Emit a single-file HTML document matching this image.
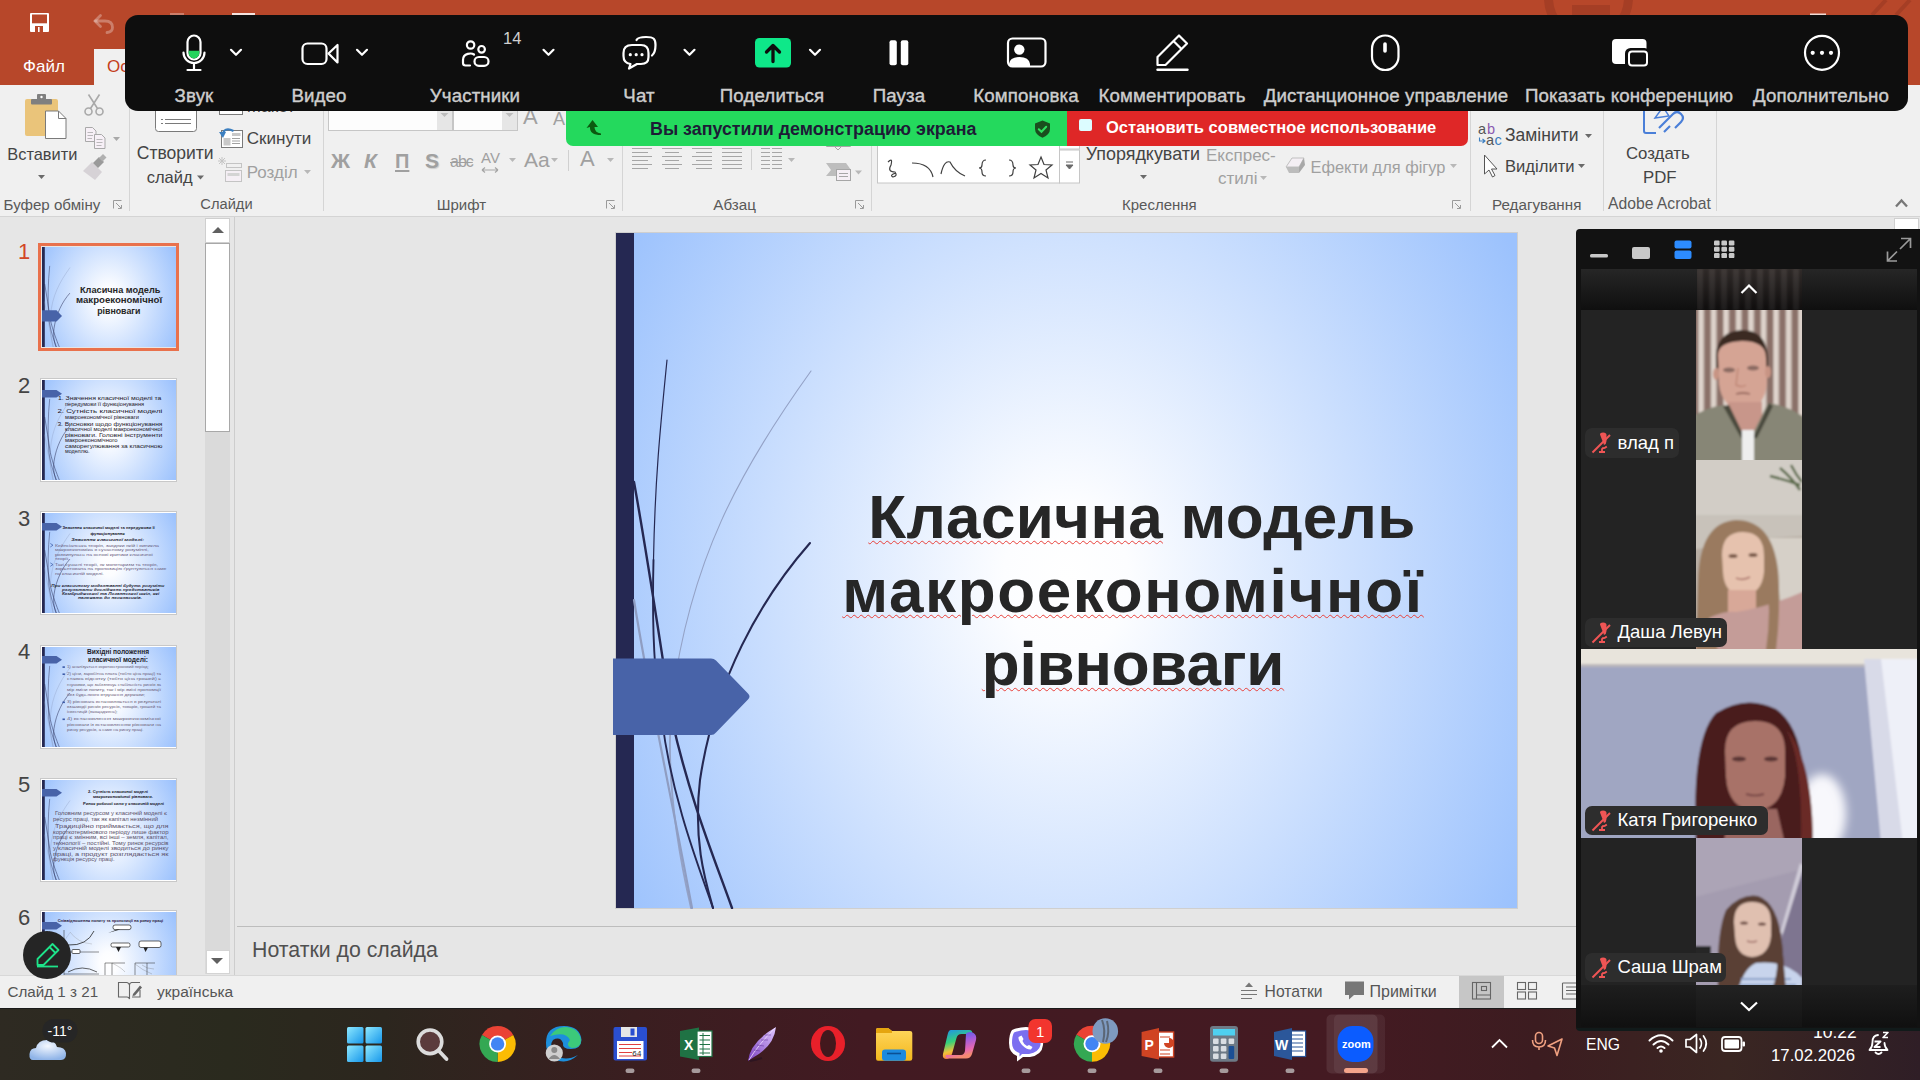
<!DOCTYPE html>
<html><head><meta charset="utf-8">
<style>
*{box-sizing:border-box;margin:0;padding:0}
html,body{width:1920px;height:1080px;overflow:hidden;background:#e6e6e6;font-family:"Liberation Sans",sans-serif}
.a{position:absolute}
.t{position:absolute;white-space:nowrap;line-height:1}
/* title bar */
#title{left:0;top:0;width:1920px;height:85px;background:#b7472a}
#tabsel{left:94px;top:49px;width:110px;height:36px;background:#f0f0f0}
#ribbon{left:0;top:85px;width:1920px;height:132px;background:#f0f0f0;border-bottom:1px solid #d4d4d4}
.sep{position:absolute;top:95px;width:1px;height:108px;background:#d4d4d4}
.glab{position:absolute;top:196px;font-size:15.5px;color:#444;white-space:nowrap;line-height:1}
.rt{position:absolute;font-size:17px;color:#262626;white-space:nowrap;line-height:1}
.rg{color:#a6a6a6}
/* workspace */
#work{left:0;top:217px;width:1920px;height:758px;background:#e6e6e6}
#status{left:0;top:975px;width:1920px;height:33px;background:#f0f0f0;border-top:1px solid #d8d8d8}
#taskbar{left:0;top:1008px;width:1920px;height:72px;background:linear-gradient(90deg,#2e2a22 0%,#2a2a1e 12%,#2c261e 20%,#3a1e20 33%,#421a22 45%,#441a22 70%,#3c1c20 80%,#3a2622 90%,#2f1e26 100%);border-top:1px solid #1a1a1a}
/* zoom toolbar */
#ztb{left:125px;top:15px;width:1783px;height:96px;background:#0e0e0e;border-radius:13px}
.zl{position:absolute;top:87px;font-size:18.7px;letter-spacing:0.12px;color:#cdcdcd;-webkit-text-stroke:0.4px #cdcdcd;white-space:nowrap;line-height:1;transform:translateX(-50%)}

.thumb{width:134px;height:100px;background:radial-gradient(ellipse 75% 75% at 48% 52%,#fff 0%,#dde8fd 35%,#9dc3fd 100%)}
.tb{border:1px solid #c8c8c8;width:137px;height:103px}
#slide{left:616px;top:233px;width:901px;height:675px;background:radial-gradient(520px 640px at 450px 345px,#ffffff 0%,#fcfdff 12%,#9cc2fd 100%);box-shadow:0 0 0 1px #cfcfcf}

.sp{text-decoration:underline wavy #e8403a;text-decoration-thickness:1px;text-underline-offset:2px}
</style></head><body>
<div id="title" class="a"></div>
<div id="tabsel" class="a"></div>
<!--TITLEICONS-->
<svg class="a" style="left:0;top:0" width="1920" height="85" viewBox="0 0 1920 85">
<rect x="30" y="13" width="19" height="19" rx="1" fill="#fff"/><rect x="32" y="14.5" width="15" height="8.8" fill="#b7472a"/><rect x="33" y="15.5" width="13" height="7" fill="#fff" opacity="0"/><rect x="35" y="26" width="8" height="6" fill="#b7472a"/><rect x="38" y="27" width="1.6" height="5" fill="#fff"/>
<g stroke="#fff" stroke-opacity="0.3" stroke-width="2.8" fill="none" stroke-linecap="round"><path d="M95.5 21 H105 Q112.5 21 112.5 27.5 Q112.5 32 107 32.5"/><path d="M100.5 15.5 L95 21 L100.5 26.5"/></g>
<rect x="232" y="13" width="23" height="2" fill="#fff" opacity="0.85"/><rect x="170" y="13" width="14" height="2" fill="#fff" opacity="0.3"/>
<circle cx="1588.5" cy="-2" r="40" fill="none" stroke="#a53e25" stroke-width="9"/><rect x="1572" y="5" width="38" height="12" fill="#a53e25"/>
<path d="M1872 15 L1886 0 M1896 15 L1910 0" stroke="#a53e25" stroke-width="4"/>
<rect x="1810" y="13.5" width="16" height="1.5" fill="#fff" opacity="0.8"/>
</svg>
<!--/TITLEICONS-->
<div class="t" style="left:23px;top:58px;font-size:17px;color:#fff">Файл</div>
<div class="t" style="left:107px;top:58px;font-size:17px;color:#c43e1c">Основне</div>
<div id="ribbon" class="a"></div>
<!--RIBBON-->
<svg class="a" style="left:0;top:85px" width="1920" height="131" viewBox="0 85 1920 131"><rect x="25" y="99" width="33" height="37" rx="2" fill="#eac47a"/><rect x="31" y="99" width="21" height="5.5" rx="1" fill="#7f7f7f"/><rect x="37" y="94" width="9" height="6" rx="1" fill="#7f7f7f"/><circle cx="41.5" cy="97" r="1.2" fill="#fff"/><path d="M45.5 111 H58.5 L66 118.5 V138.5 H45.5 Z" fill="#fff" stroke="#7a7a7a" stroke-width="1"/><path d="M58.5 111 V118.5 H66" fill="none" stroke="#7a7a7a"/><g fill="none" stroke="#a9a9a9" stroke-width="1.6"><circle cx="88.5" cy="111.5" r="3.5"/><circle cx="99.5" cy="111.5" r="3.5"/><path d="M90.5 108.5 L99.5 94.5 M97.5 108.5 L88.5 94.5"/></g><g fill="#f7f0f7" stroke="#a9a9a9" stroke-width="1"><path d="M85.5 127.5 H92.5 L96 131 V141.5 H85.5 Z"/><path d="M94.5 134.5 H101.5 L105 138 V148.5 H94.5 Z"/></g><path d="M113 137 H120 L116.5 141 Z" fill="#a9a9a9"/><path d="M87.5 132.5 H93 M87.5 135.5 H93 M87.5 138.5 H92 M96.5 139.5 H102.5 M96.5 142.5 H102.5 M96.5 145.5 H101.5" stroke="#a9a9a9" stroke-width="0.8"/><path d="M83 171 L92 162 L102 172 L95 180 Z" fill="#d6d2d6"/><path d="M93 163 L99 157 L104 162 L98 168 Z" fill="#9a9a9a"/><path d="M99 158 L103 154 L106.5 157.5 L102.5 161.5 Z" fill="#b0b0b0"/><path d="M38 175 H45 L41.5 179 Z" fill="#6a6a6a"/><path d="M197 175.5 H204 L200.5 179.5 Z" fill="#6a6a6a"/><path d="M304 170 H311 L307.5 174 Z" fill="#b8b8b8"/><path d="M1140 175 H1147 L1143.5 179 Z" fill="#6a6a6a"/><path d="M1260 176 H1267 L1263.5 180 Z" fill="#b8b8b8"/><path d="M1450 164 H1457 L1453.5 168 Z" fill="#b8b8b8"/><path d="M1585 134 H1592 L1588.5 138 Z" fill="#6a6a6a"/><path d="M1578 164 H1585 L1581.5 168 Z" fill="#6a6a6a"/><path d="M509 158 H516 L512.5 162 Z" fill="#b8b8b8"/><path d="M551 158 H558 L554.5 162 Z" fill="#b8b8b8"/><path d="M607 158 H614 L610.5 162 Z" fill="#b8b8b8"/><path d="M788 158 H795 L791.5 162 Z" fill="#b8b8b8"/><path d="M855 170.5 H862 L858.5 174.5 Z" fill="#b8b8b8"/><path d="M437 113 H444 L440.5 117 Z" fill="#b8b8b8"/><path d="M502 113 H509 L505.5 117 Z" fill="#b8b8b8"/><path d="M113.5 208.5 V200.5 H121.5" fill="none" stroke="#9a9a9a" stroke-width="1"/><path d="M116 203 L121 208 M118 208.5 H121.5 V205" fill="none" stroke="#9a9a9a" stroke-width="1"/><path d="M606.5 208.5 V200.5 H614.5" fill="none" stroke="#9a9a9a" stroke-width="1"/><path d="M609 203 L614 208 M611 208.5 H614.5 V205" fill="none" stroke="#9a9a9a" stroke-width="1"/><path d="M855.5 208.5 V200.5 H863.5" fill="none" stroke="#9a9a9a" stroke-width="1"/><path d="M858 203 L863 208 M860 208.5 H863.5 V205" fill="none" stroke="#9a9a9a" stroke-width="1"/><path d="M1452.5 208.5 V200.5 H1460.5" fill="none" stroke="#9a9a9a" stroke-width="1"/><path d="M1455 203 L1460 208 M1457 208.5 H1460.5 V205" fill="none" stroke="#9a9a9a" stroke-width="1"/><rect x="155.5" y="96" width="41" height="35.5" rx="3" fill="#fff" stroke="#7a7a7a" stroke-width="1"/><path d="M161 119.5 H163 M165 119.5 H191 M161 123.5 H163 M165 123.5 H191" stroke="#7a7a7a" stroke-width="1"/><rect x="219.5" y="100" width="23" height="14.5" fill="#fff" stroke="#7a7a7a"/><rect x="221.5" y="130.5" width="21" height="17" fill="#fff" stroke="#7a7a7a"/><rect x="223.5" y="138" width="7" height="7.5" fill="#c8c8c8"/><path d="M232 133 H240.5 V136 H232 Z" fill="#c8c8c8"/><path d="M232 138.5 H240 M232 141 H240 M232 143.5 H240" stroke="#8a8a8a" stroke-width="0.8"/><path d="M222 136 Q224 126 233.5 131" fill="none" stroke="#3c7fc0" stroke-width="2"/><path d="M219 132 L223 138 L226 132 Z" fill="#3c7fc0"/><g fill="none" stroke="#c4c4c4" stroke-width="1"><rect x="226.5" y="163.5" width="15" height="4"/><rect x="225.5" y="170.5" width="16" height="11" fill="#f5eff5"/><path d="M219 158 L225 164 M225 158 L219 164 M222 157 V165 M218 161 H226"/></g><rect x="227.5" y="173" width="12" height="3" fill="#d4d4d4"/><rect x="328.5" y="100" width="124" height="30.5" fill="#fdfdfd" stroke="#c6c6c6"/><rect x="437" y="101" width="15" height="29" fill="#e6e6e6"/><rect x="453.5" y="100" width="64" height="30.5" fill="#fdfdfd" stroke="#c6c6c6"/><rect x="502" y="101" width="15" height="29" fill="#e6e6e6"/><path d="M440.5 113 H448.5 L444.5 117 Z M505.5 113 H513.5 L509.5 117 Z" fill="#bdbdbd"/><path d="M568.5 150 V171" stroke="#d0d0d0"/><path d="M751.5 149 V170" stroke="#d0d0d0"/><path d="M482 170 H498 M482 170 L485 167.5 M482 170 L485 172.5 M498 170 L495 167.5 M498 170 L495 172.5" stroke="#a6a6a6" stroke-width="1.2" fill="none"/><path d="M632 148.5 H652 M662 148.5 H682 M692 148.5 H712 M722 148.5 H742 M761 148.5 H770 M772 148.5 H782 M632 152.5 H648 M665 152.5 H679 M696 152.5 H712 M722 152.5 H742 M761 152.5 H770 M772 152.5 H782 M632 156.5 H652 M662 156.5 H682 M692 156.5 H712 M722 156.5 H742 M761 156.5 H770 M772 156.5 H782 M632 160.5 H648 M665 160.5 H679 M696 160.5 H712 M722 160.5 H742 M761 160.5 H770 M772 160.5 H782 M632 164.5 H652 M662 164.5 H682 M692 164.5 H712 M722 164.5 H742 M761 164.5 H770 M772 164.5 H782 M632 168.5 H648 M665 168.5 H679 M696 168.5 H712 M722 168.5 H742 M761 168.5 H770 M772 168.5 H782" stroke="#a6a6a6" stroke-width="1"/><path d="M826 163 H846 L851 170 L846 176 H826 L831 170 Z" fill="#bdbdbd"/><rect x="836.5" y="169.5" width="14" height="11" fill="#f5eff5" stroke="#a6a6a6"/><path d="M839 173.5 H848 M839 176.5 H848" stroke="#a6a6a6"/><path d="M826.5 140 V146.5 H850.5 V140 M834 146 L838 150 L842 146" fill="none" stroke="#a6a6a6"/><rect x="877.5" y="100" width="182" height="83" fill="#fff" stroke="#c6c6c6"/><rect x="1059.5" y="150" width="20" height="33" fill="#fff" stroke="#c6c6c6"/><rect x="1059.5" y="100" width="20" height="49" fill="#fff" stroke="#c6c6c6"/><path d="M1066 162 H1073 M1066 165 H1073 L1069.5 169 Z" stroke="#6a6a6a" fill="#6a6a6a" stroke-width="1"/><g fill="none" stroke="#404040" stroke-width="1.2"><path d="M888 162 Q893 157 891 165 Q887 172 895 172 Q898 176 893 177 Q889 175 896 173"/><path d="M912 163 Q930 163 933 177"/><path d="M941 174 Q944 160 950 162 Q955 172 965 176"/><path d="M986 160 Q982 160 982 165 Q982 168 979 168 Q982 168 982 172 Q982 176 986 176"/><path d="M1009 160 Q1013 160 1013 165 Q1013 168 1016 168 Q1013 168 1013 172 Q1013 176 1009 176"/><path d="M1041 157 L1044 164.5 L1052 165 L1046 170 L1048 178 L1041 173.5 L1034 178 L1036 170 L1030 165 L1038 164.5 Z"/></g><path d="M1286 167 L1292 158 H1304 L1299 167 Z" fill="#f4eff4" stroke="#c0c0c0"/><path d="M1286 167 L1299 167 L1299 173 L1289 173 Z" fill="#bcbcbc"/><path d="M1299 167 L1304 158 L1305 165 L1299 173 Z" fill="#a8a8a8"/><text x="1478" y="134" font-family="Liberation Sans" font-size="14.5" fill="#555">a</text><text x="1487" y="134" font-family="Liberation Sans" font-size="14.5" fill="#8a5ab0">b</text><text x="1486" y="144.5" font-family="Liberation Sans" font-size="14.5" fill="#555">a</text><text x="1494.5" y="144.5" font-family="Liberation Sans" font-size="14.5" fill="#3c7fc0">c</text><path d="M1479.5 137.5 V141 H1485 M1482.5 139 L1485 141 L1482.5 143" fill="none" stroke="#3c7fc0" stroke-width="1.1"/><path d="M1484.5 155 V174 L1489 170 L1492.5 177 L1495 175.5 L1491.5 169 H1497 Z" fill="#fff" stroke="#555" stroke-width="1"/><path d="M1644 100 V131 Q1644 133 1646 133 H1656" fill="none" stroke="#4a7fd8" stroke-width="2"/><path d="M1659 128 L1673 114 Q1677 110 1681 114 Q1685 118 1681 122 L1675 128 M1664 132 L1670 126" fill="none" stroke="#4a7fd8" stroke-width="2.2"/><path d="M1655 118 L1663 107 L1669 116 Z" fill="none" stroke="#4a7fd8" stroke-width="1.4"/><path d="M1896 206.5 L1901.5 200.5 L1907 206.5" fill="none" stroke="#777" stroke-width="2.3"/></svg>
<div class="a" style="left:129px;top:108px;width:1px;height:103px;background:#d5d5d5"></div>
<div class="a" style="left:323px;top:108px;width:1px;height:103px;background:#d5d5d5"></div>
<div class="a" style="left:622px;top:108px;width:1px;height:103px;background:#d5d5d5"></div>
<div class="a" style="left:871px;top:108px;width:1px;height:103px;background:#d5d5d5"></div>
<div class="a" style="left:1470px;top:108px;width:1px;height:103px;background:#d5d5d5"></div>
<div class="a" style="left:1603px;top:108px;width:1px;height:103px;background:#d5d5d5"></div>
<div class="a" style="left:1716px;top:108px;width:1px;height:103px;background:#d5d5d5"></div>
<div class="t" style="left:3.6px;top:197.0px;font-size:15.1px;color:#595959;">Буфер обміну</div>
<div class="t" style="left:200.3px;top:197.1px;font-size:14.7px;color:#595959;">Слайди</div>
<div class="t" style="left:436.7px;top:196.8px;font-size:15px;color:#595959;">Шрифт</div>
<div class="t" style="left:713.3px;top:196.6px;font-size:15.2px;color:#595959;">Абзац</div>
<div class="t" style="left:1122px;top:196.8px;font-size:15px;color:#595959;">Креслення</div>
<div class="t" style="left:1492px;top:196.6px;font-size:15.2px;color:#595959;">Редагування</div>
<div class="t" style="left:1608px;top:196.2px;font-size:15.7px;color:#595959;">Adobe Acrobat</div>
<div class="t" style="left:7.3px;top:145.8px;font-size:16.4px;color:#444;">Вставити</div>
<div class="t" style="left:136.8px;top:144.9px;font-size:17.5px;color:#444;">Створити</div>
<div class="t" style="left:146.7px;top:169.0px;font-size:16.5px;color:#444;">слайд</div>
<div class="t" style="left:246.7px;top:98.0px;font-size:17.1px;color:#444;">Макет</div>
<div class="t" style="left:246.7px;top:130.1px;font-size:17.1px;color:#444;">Скинути</div>
<div class="t" style="left:246.7px;top:163.6px;font-size:17px;color:#a0a0a0;">Розділ</div>
<div class="t" style="left:1085.8px;top:145.5px;font-size:17.9px;color:#444;">Упорядкувати</div>
<div class="t" style="left:1206px;top:146.6px;font-size:17px;color:#a0a0a0;">Експрес-</div>
<div class="t" style="left:1218px;top:169.6px;font-size:17px;color:#a0a0a0;">стилі</div>
<div class="t" style="left:1310.5px;top:158.7px;font-size:16.4px;color:#a0a0a0;">Ефекти для фігур</div>
<div class="t" style="left:1505px;top:126.8px;font-size:17.5px;color:#444;">Замінити</div>
<div class="t" style="left:1505px;top:158.5px;font-size:16.6px;color:#444;">Виділити</div>
<div class="t" style="left:1626px;top:145.5px;font-size:16.8px;color:#444;">Создать</div>
<div class="t" style="left:1643px;top:169.8px;font-size:16.8px;color:#444;">PDF</div>
<div class="t" style="left:331px;top:150.2px;font-size:21px;color:#a0a0a0;font-weight:bold">Ж</div>
<div class="t" style="left:364px;top:150.2px;font-size:21px;color:#a0a0a0;font-weight:bold;font-style:italic">К</div>
<div class="t" style="left:395px;top:151.1px;font-size:20px;color:#a0a0a0;font-weight:bold;text-decoration:underline;text-underline-offset:2px;text-decoration-thickness:2px">П</div>
<div class="t" style="left:425px;top:150.2px;font-size:21px;color:#a0a0a0;font-weight:bold;text-shadow:1px 1px 1px #ccc">S</div>
<div class="t" style="left:450px;top:153.5px;font-size:16px;color:#a0a0a0;text-decoration:line-through;letter-spacing:-1px">abc</div>
<div class="t" style="left:481px;top:150.3px;font-size:15px;color:#a0a0a0;">AV</div>
<div class="t" style="left:524px;top:149.2px;font-size:21px;color:#a0a0a0;">Aa</div>
<div class="t" style="left:580px;top:148.4px;font-size:22px;color:#a0a0a0;">A</div>
<div class="t" style="left:523px;top:106.4px;font-size:22px;color:#a0a0a0;">A</div>
<div class="t" style="left:553px;top:109.8px;font-size:18px;color:#a0a0a0;">A</div>
<!--/RIBBON-->
<div id="work" class="a"></div>

<!-- thumbnails panel -->
<div class="a" style="left:234px;top:217px;width:1px;height:758px;background:#cdcdcd"></div>
<div class="a" style="left:205px;top:218px;width:25px;height:756px;background:#dadada"></div>
<div class="a" style="left:205px;top:218px;width:25px;height:24.5px;background:#fff;border:1px solid #cfcfcf"></div>
<div class="a" style="left:211.5px;top:226.5px;width:0;height:0;border-left:6px solid transparent;border-right:6px solid transparent;border-bottom:6px solid #606060"></div>
<div class="a" style="left:205px;top:243px;width:25px;height:189px;background:#fff;border:1px solid #a8a8a8"></div>
<div class="a" style="left:206px;top:950px;width:24px;height:24px;background:#fff;border:1px solid #d4d4d4"></div>
<div class="a" style="left:211px;top:958px;width:0;height:0;border-left:6px solid transparent;border-right:6px solid transparent;border-top:6px solid #606060"></div>
<div class="t" style="left:18px;top:240.8px;font-size:22px;color:#d24726">1</div>
<div class="t" style="left:18px;top:374.8px;font-size:22px;color:#444">2</div>
<div class="t" style="left:18px;top:507.8px;font-size:22px;color:#444">3</div>
<div class="t" style="left:18px;top:640.8px;font-size:22px;color:#444">4</div>
<div class="t" style="left:18px;top:773.8px;font-size:22px;color:#444">5</div>
<div class="t" style="left:18px;top:906.8px;font-size:22px;color:#444">6</div>
<div class="a" style="left:38px;top:243px;width:141px;height:108px;border:3px solid #e9714c"></div>
<!--TB-->
<div class="a" style="left:40px;top:378px;width:137px;height:104px;border:1px solid #c8c8c8;background:#fff"></div>
<div class="a" style="left:40px;top:511px;width:137px;height:104px;border:1px solid #c8c8c8;background:#fff"></div>
<div class="a" style="left:40px;top:644.5px;width:137px;height:104px;border:1px solid #c8c8c8;background:#fff"></div>
<div class="a" style="left:40px;top:778px;width:137px;height:104px;border:1px solid #c8c8c8;background:#fff"></div>
<div class="a" style="left:40px;top:910px;width:137px;height:70px;border:1px solid #c8c8c8;background:#fff"></div>
<!--/TB-->
<!--THUMBS-->
<div class="a" style="left:42px;top:247px;width:134px;height:100px;overflow:hidden"><svg width="134" height="100" viewBox="0 0 134 100" style="display:block">
<defs><radialGradient id="tg1" gradientUnits="userSpaceOnUse" cx="66.9" cy="51.3" r="77.3" gradientTransform="translate(66.9 51.3) scale(1 1.2308) translate(-66.9 -51.3)"><stop offset="0" stop-color="#fff"/><stop offset="0.12" stop-color="#fcfdff"/><stop offset="1" stop-color="#9cc2fd"/></radialGradient></defs>
<rect width="134" height="100" fill="url(#tg1)"/>
<rect x="0" y="0" width="2.8" height="100" fill="#252852"/>
<g fill="none" stroke-width="0.35">
<path d="M28 20.5 C 17.5 35.3, 10 48.7, 8.4 69.5 C 7.2 81.5, 9.5 93.3, 11 100" stroke="#8c9bc0"/>
<path d="M2.7 54.6 C 5 69.5, 8.3 84.3, 11.3 100" stroke="#8896bd"/>
<path d="M7.7 18.9 C 6 35.3, 5.5 54.6, 6.9 72.5 C 8.4 84.3, 12.6 94.8, 14.5 100" stroke="#252852" stroke-width="0.45"/>
<path d="M2.7 37 C 4.8 48.7, 6.5 60.5, 8.3 72.5 C 11 84.3, 14.7 93.3, 17.3 100" stroke="#252852" stroke-width="0.5"/>
<path d="M27.9 46.1 C 20.4 54.6, 14.2 66.5, 12 81.4 C 10.9 90.3, 12.7 96.3, 14 100" stroke="#252852" stroke-width="0.5"/>
</g>
<path d="M-0.5 63.3 H14.5 L20 68.9 L14.5 74.6 H-0.5 Z" fill="#4863a8"/>
<g transform="translate(0,0)"><text x="38" y="45.5" textLength="80.4" lengthAdjust="spacingAndGlyphs" font-family="Liberation Sans" font-size="9.2" font-weight="bold" font-style="normal" fill="#262626">Класична модель</text><text x="34" y="56.4" textLength="86.1" lengthAdjust="spacingAndGlyphs" font-family="Liberation Sans" font-size="9.2" font-weight="bold" font-style="normal" fill="#262626">макроекономічної</text><text x="55.2" y="67.3" textLength="43.2" lengthAdjust="spacingAndGlyphs" font-family="Liberation Sans" font-size="9.2" font-weight="bold" font-style="normal" fill="#262626">рівноваги</text></g>
</svg></div>
<div class="a" style="left:42px;top:380px;width:134px;height:100px;overflow:hidden"><svg width="134" height="100" viewBox="0 0 134 100" style="display:block">
<defs><radialGradient id="tg2" gradientUnits="userSpaceOnUse" cx="66.9" cy="51.3" r="77.3" gradientTransform="translate(66.9 51.3) scale(1 1.2308) translate(-66.9 -51.3)"><stop offset="0" stop-color="#fff"/><stop offset="0.12" stop-color="#fcfdff"/><stop offset="1" stop-color="#9cc2fd"/></radialGradient></defs>
<rect width="134" height="100" fill="url(#tg2)"/>
<rect x="0" y="0" width="2.8" height="100" fill="#252852"/>
<g fill="none" stroke-width="0.35">
<path d="M28 20.5 C 17.5 35.3, 10 48.7, 8.4 69.5 C 7.2 81.5, 9.5 93.3, 11 100" stroke="#8c9bc0"/>
<path d="M2.7 54.6 C 5 69.5, 8.3 84.3, 11.3 100" stroke="#8896bd"/>
<path d="M7.7 18.9 C 6 35.3, 5.5 54.6, 6.9 72.5 C 8.4 84.3, 12.6 94.8, 14.5 100" stroke="#252852" stroke-width="0.45"/>
<path d="M2.7 37 C 4.8 48.7, 6.5 60.5, 8.3 72.5 C 11 84.3, 14.7 93.3, 17.3 100" stroke="#252852" stroke-width="0.5"/>
<path d="M27.9 46.1 C 20.4 54.6, 14.2 66.5, 12 81.4 C 10.9 90.3, 12.7 96.3, 14 100" stroke="#252852" stroke-width="0.5"/>
</g>
<path d="M-0.5 10 H14.5 L20 13.8 L14.5 17.5 H-0.5 Z" fill="#4863a8"/>
<text x="15.9" y="20.0" textLength="103.5" lengthAdjust="spacingAndGlyphs" font-family="Liberation Sans" font-size="4.5" font-weight="normal" font-style="normal" fill="#1e1828">1.   Значення   класичної   моделі   та</text><text x="23" y="25.5" textLength="79" lengthAdjust="spacingAndGlyphs" font-family="Liberation Sans" font-size="4.5" font-weight="normal" font-style="normal" fill="#1e1828">передумови її функціонування</text><text x="15.4" y="32.7" textLength="105.0" lengthAdjust="spacingAndGlyphs" font-family="Liberation Sans" font-size="4.5" font-weight="normal" font-style="normal" fill="#1e1828">2.    Сутність    класичної    моделі</text><text x="23" y="38.8" textLength="74" lengthAdjust="spacingAndGlyphs" font-family="Liberation Sans" font-size="4.5" font-weight="normal" font-style="normal" fill="#1e1828">макроекономічної рівноваги</text><text x="15.4" y="45.7" textLength="105.0" lengthAdjust="spacingAndGlyphs" font-family="Liberation Sans" font-size="4.5" font-weight="normal" font-style="normal" fill="#1e1828">3.  Висновки  щодо  функціонування</text><text x="23" y="51.1" textLength="97.4" lengthAdjust="spacingAndGlyphs" font-family="Liberation Sans" font-size="4.5" font-weight="normal" font-style="normal" fill="#1e1828">класичної моделі макроекономічної</text><text x="23" y="56.7" textLength="97.4" lengthAdjust="spacingAndGlyphs" font-family="Liberation Sans" font-size="4.5" font-weight="normal" font-style="normal" fill="#1e1828">рівноваги.   Головні   інструменти</text><text x="23" y="61.8" textLength="52.5" lengthAdjust="spacingAndGlyphs" font-family="Liberation Sans" font-size="4.5" font-weight="normal" font-style="normal" fill="#1e1828">макроекономічного</text><text x="23" y="67.9" textLength="97.4" lengthAdjust="spacingAndGlyphs" font-family="Liberation Sans" font-size="4.5" font-weight="normal" font-style="normal" fill="#1e1828">саморегулювання  за  класичною</text><text x="23" y="73.0" textLength="24.5" lengthAdjust="spacingAndGlyphs" font-family="Liberation Sans" font-size="4.5" font-weight="normal" font-style="normal" fill="#1e1828">моделлю.</text>
</svg></div>
<div class="a" style="left:42px;top:513px;width:134px;height:100px;overflow:hidden"><svg width="134" height="100" viewBox="0 0 134 100" style="display:block">
<defs><radialGradient id="tg3" gradientUnits="userSpaceOnUse" cx="66.9" cy="51.3" r="77.3" gradientTransform="translate(66.9 51.3) scale(1 1.2308) translate(-66.9 -51.3)"><stop offset="0" stop-color="#fff"/><stop offset="0.12" stop-color="#fcfdff"/><stop offset="1" stop-color="#9cc2fd"/></radialGradient></defs>
<rect width="134" height="100" fill="url(#tg3)"/>
<rect x="0" y="0" width="2.8" height="100" fill="#252852"/>
<g fill="none" stroke-width="0.35">
<path d="M28 20.5 C 17.5 35.3, 10 48.7, 8.4 69.5 C 7.2 81.5, 9.5 93.3, 11 100" stroke="#8c9bc0"/>
<path d="M2.7 54.6 C 5 69.5, 8.3 84.3, 11.3 100" stroke="#8896bd"/>
<path d="M7.7 18.9 C 6 35.3, 5.5 54.6, 6.9 72.5 C 8.4 84.3, 12.6 94.8, 14.5 100" stroke="#252852" stroke-width="0.45"/>
<path d="M2.7 37 C 4.8 48.7, 6.5 60.5, 8.3 72.5 C 11 84.3, 14.7 93.3, 17.3 100" stroke="#252852" stroke-width="0.5"/>
<path d="M27.9 46.1 C 20.4 54.6, 14.2 66.5, 12 81.4 C 10.9 90.3, 12.7 96.3, 14 100" stroke="#252852" stroke-width="0.5"/>
</g>
<path d="M-0.5 10 H14.5 L20 13.8 L14.5 17.5 H-0.5 Z" fill="#4863a8"/>
<text x="20.5" y="16.4" textLength="92.3" lengthAdjust="spacingAndGlyphs" font-family="Liberation Sans" font-size="3.6" font-weight="bold" font-style="normal" fill="#1a1a2a">Значення класичної моделі та передумови її</text><text x="48.5" y="21.5" textLength="34.2" lengthAdjust="spacingAndGlyphs" font-family="Liberation Sans" font-size="3.6" font-weight="bold" font-style="normal" fill="#1a1a2a">функціонування</text><text x="29.2" y="27.9" textLength="72.8" lengthAdjust="spacingAndGlyphs" font-family="Liberation Sans" font-size="4.2" font-weight="bold" font-style="italic" fill="#2a2a3a">Значення класичної моделі:</text><text x="12.9" y="33.7" textLength="103.89999999999999" lengthAdjust="spacingAndGlyphs" font-family="Liberation Sans" font-size="4.2" font-weight="normal" font-style="normal" fill="#6a6080">Кейнсіанська теорія, завдяки якій і виникла</text><text x="12.9" y="38.1" textLength="93.69999999999999" lengthAdjust="spacingAndGlyphs" font-family="Liberation Sans" font-size="4.2" font-weight="normal" font-style="normal" fill="#6a6080">макроекономіка в сучасному розумінні,</text><text x="12.9" y="42.6" textLength="98.1" lengthAdjust="spacingAndGlyphs" font-family="Liberation Sans" font-size="4.2" font-weight="normal" font-style="normal" fill="#6a6080">розвинулась на основі критики класичної</text><text x="12.9" y="47.0" textLength="14.6" lengthAdjust="spacingAndGlyphs" font-family="Liberation Sans" font-size="4.2" font-weight="normal" font-style="normal" fill="#6a6080">теорії.</text><text x="12.9" y="53.1" textLength="103.1" lengthAdjust="spacingAndGlyphs" font-family="Liberation Sans" font-size="4.2" font-weight="normal" font-style="normal" fill="#6a6080">Такі сучасні теорії, як монетаризм та теорія,</text><text x="12.9" y="57.0" textLength="111.6" lengthAdjust="spacingAndGlyphs" font-family="Liberation Sans" font-size="4.2" font-weight="normal" font-style="normal" fill="#6a6080">зорієнтована на пропозицію ґрунтуються саме</text><text x="12.9" y="61.8" textLength="48.9" lengthAdjust="spacingAndGlyphs" font-family="Liberation Sans" font-size="4.2" font-weight="normal" font-style="normal" fill="#6a6080">на класичній моделі.</text><text x="9.3" y="74.0" textLength="113.10000000000001" lengthAdjust="spacingAndGlyphs" font-family="Liberation Sans" font-size="4.2" font-weight="bold" font-style="italic" fill="#2a2a3a">При класичному моделюванні будуть розуміти</text><text x="20" y="77.5" textLength="97.4" lengthAdjust="spacingAndGlyphs" font-family="Liberation Sans" font-size="4.2" font-weight="bold" font-style="italic" fill="#2a2a3a">результати досліджень представників</text><text x="20" y="82.1" textLength="97.4" lengthAdjust="spacingAndGlyphs" font-family="Liberation Sans" font-size="4.2" font-weight="bold" font-style="italic" fill="#2a2a3a">Кембриджської та Лозаннської шкіл, які</text><text x="36" y="85.7" textLength="64" lengthAdjust="spacingAndGlyphs" font-family="Liberation Sans" font-size="4.2" font-weight="bold" font-style="italic" fill="#2a2a3a">належать до неокласиків.</text><path d="M8.3 30.5 L11 32.2 L8.3 34 M8.3 49.9 L11 51.6 L8.3 53.3" stroke="#3a5aa8" stroke-width="0.7" fill="none"/>
</svg></div>
<div class="a" style="left:42px;top:646.5px;width:134px;height:100px;overflow:hidden"><svg width="134" height="100" viewBox="0 0 134 100" style="display:block">
<defs><radialGradient id="tg4" gradientUnits="userSpaceOnUse" cx="66.9" cy="51.3" r="77.3" gradientTransform="translate(66.9 51.3) scale(1 1.2308) translate(-66.9 -51.3)"><stop offset="0" stop-color="#fff"/><stop offset="0.12" stop-color="#fcfdff"/><stop offset="1" stop-color="#9cc2fd"/></radialGradient></defs>
<rect width="134" height="100" fill="url(#tg4)"/>
<rect x="0" y="0" width="2.8" height="100" fill="#252852"/>
<g fill="none" stroke-width="0.35">
<path d="M28 20.5 C 17.5 35.3, 10 48.7, 8.4 69.5 C 7.2 81.5, 9.5 93.3, 11 100" stroke="#8c9bc0"/>
<path d="M2.7 54.6 C 5 69.5, 8.3 84.3, 11.3 100" stroke="#8896bd"/>
<path d="M7.7 18.9 C 6 35.3, 5.5 54.6, 6.9 72.5 C 8.4 84.3, 12.6 94.8, 14.5 100" stroke="#252852" stroke-width="0.45"/>
<path d="M2.7 37 C 4.8 48.7, 6.5 60.5, 8.3 72.5 C 11 84.3, 14.7 93.3, 17.3 100" stroke="#252852" stroke-width="0.5"/>
<path d="M27.9 46.1 C 20.4 54.6, 14.2 66.5, 12 81.4 C 10.9 90.3, 12.7 96.3, 14 100" stroke="#252852" stroke-width="0.5"/>
</g>
<path d="M-0.5 9 H14.5 L20 12.8 L14.5 16.5 H-0.5 Z" fill="#4863a8"/>
<text x="45" y="7.0" textLength="62" lengthAdjust="spacingAndGlyphs" font-family="Liberation Sans" font-size="6.6" font-weight="bold" font-style="normal" fill="#1e1e2a">Вихідні положення</text><text x="46" y="15.2" textLength="60" lengthAdjust="spacingAndGlyphs" font-family="Liberation Sans" font-size="6.6" font-weight="bold" font-style="normal" fill="#1e1e2a">класичної моделі:</text><text x="25" y="20.8" textLength="81.6" lengthAdjust="spacingAndGlyphs" font-family="Liberation Sans" font-size="3.4" font-weight="normal" font-style="normal" fill="#6a6078">1)  аналізується короткостроковий період;</text><text x="25" y="27.900000000000002" textLength="94" lengthAdjust="spacingAndGlyphs" font-family="Liberation Sans" font-size="3.4" font-weight="normal" font-style="normal" fill="#6a6078">2)  ціни, заробітна плата (тобто ціна праці) та</text><text x="25" y="33.199999999999996" textLength="94" lengthAdjust="spacingAndGlyphs" font-family="Liberation Sans" font-size="3.4" font-weight="normal" font-style="normal" fill="#6a6078">ставка  відсотку  (тобто  ціна  грошей)  є</text><text x="25" y="38.9" textLength="94" lengthAdjust="spacingAndGlyphs" font-family="Liberation Sans" font-size="3.4" font-weight="normal" font-style="normal" fill="#6a6078">гнучкими, що забезпечує стабільність ринків за</text><text x="25" y="44.0" textLength="94" lengthAdjust="spacingAndGlyphs" font-family="Liberation Sans" font-size="3.4" font-weight="normal" font-style="normal" fill="#6a6078">мір зміни попиту, так і мір зміні пропозиції</text><text x="25" y="48.8" textLength="78" lengthAdjust="spacingAndGlyphs" font-family="Liberation Sans" font-size="3.4" font-weight="normal" font-style="normal" fill="#6a6078">без будь-якого втручання держави;</text><text x="25" y="56.0" textLength="94" lengthAdjust="spacingAndGlyphs" font-family="Liberation Sans" font-size="3.4" font-weight="normal" font-style="normal" fill="#6a6078">3)  рівновага  встановлюється  в  результаті</text><text x="25" y="61.0" textLength="94" lengthAdjust="spacingAndGlyphs" font-family="Liberation Sans" font-size="3.4" font-weight="normal" font-style="normal" fill="#6a6078">взаємодії ринків ресурсів, товарів, грошей та</text><text x="25" y="66.1" textLength="50.5" lengthAdjust="spacingAndGlyphs" font-family="Liberation Sans" font-size="3.4" font-weight="normal" font-style="normal" fill="#6a6078">інвестицій (заощаджень);</text><text x="25" y="73.0" textLength="94" lengthAdjust="spacingAndGlyphs" font-family="Liberation Sans" font-size="3.4" font-weight="normal" font-style="normal" fill="#6a6078">4)  встановлення  макроекономічної</text><text x="25" y="78.89999999999999" textLength="94" lengthAdjust="spacingAndGlyphs" font-family="Liberation Sans" font-size="3.4" font-weight="normal" font-style="normal" fill="#6a6078">рівноваги  із  встановленням  рівноваги  на</text><text x="25" y="84.2" textLength="76.5" lengthAdjust="spacingAndGlyphs" font-family="Liberation Sans" font-size="3.4" font-weight="normal" font-style="normal" fill="#6a6078">ринку ресурсів, а саме на ринку праці.</text><rect x="20.5" y="19.3" width="2.4" height="1.6" fill="#3a5aa8"/><rect x="20.5" y="26.400000000000002" width="2.4" height="1.6" fill="#3a5aa8"/><rect x="20.5" y="54.5" width="2.4" height="1.6" fill="#3a5aa8"/><rect x="20.5" y="71.5" width="2.4" height="1.6" fill="#3a5aa8"/>
</svg></div>
<div class="a" style="left:42px;top:780px;width:134px;height:100px;overflow:hidden"><svg width="134" height="100" viewBox="0 0 134 100" style="display:block">
<defs><radialGradient id="tg5" gradientUnits="userSpaceOnUse" cx="66.9" cy="51.3" r="77.3" gradientTransform="translate(66.9 51.3) scale(1 1.2308) translate(-66.9 -51.3)"><stop offset="0" stop-color="#fff"/><stop offset="0.12" stop-color="#fcfdff"/><stop offset="1" stop-color="#9cc2fd"/></radialGradient></defs>
<rect width="134" height="100" fill="url(#tg5)"/>
<rect x="0" y="0" width="2.8" height="100" fill="#252852"/>
<g fill="none" stroke-width="0.35">
<path d="M28 20.5 C 17.5 35.3, 10 48.7, 8.4 69.5 C 7.2 81.5, 9.5 93.3, 11 100" stroke="#8c9bc0"/>
<path d="M2.7 54.6 C 5 69.5, 8.3 84.3, 11.3 100" stroke="#8896bd"/>
<path d="M7.7 18.9 C 6 35.3, 5.5 54.6, 6.9 72.5 C 8.4 84.3, 12.6 94.8, 14.5 100" stroke="#252852" stroke-width="0.45"/>
<path d="M2.7 37 C 4.8 48.7, 6.5 60.5, 8.3 72.5 C 11 84.3, 14.7 93.3, 17.3 100" stroke="#252852" stroke-width="0.5"/>
<path d="M27.9 46.1 C 20.4 54.6, 14.2 66.5, 12 81.4 C 10.9 90.3, 12.7 96.3, 14 100" stroke="#252852" stroke-width="0.5"/>
</g>
<path d="M-0.5 9 H14.5 L20 12.8 L14.5 16.5 H-0.5 Z" fill="#4863a8"/>
<text x="46" y="12.8" textLength="60" lengthAdjust="spacingAndGlyphs" font-family="Liberation Sans" font-size="3.4" font-weight="bold" font-style="normal" fill="#1a1a2a">2. Сутність класичної моделі</text><text x="51" y="18.2" textLength="60" lengthAdjust="spacingAndGlyphs" font-family="Liberation Sans" font-size="3.4" font-weight="bold" font-style="normal" fill="#1a1a2a">макроекономічної рівноваги.</text><text x="41" y="24.900000000000002" textLength="81" lengthAdjust="spacingAndGlyphs" font-family="Liberation Sans" font-size="3.4" font-weight="bold" font-style="normal" fill="#1a1a2a">Ринок робочої сили у класичній моделі</text><text x="13" y="35.0" textLength="112" lengthAdjust="spacingAndGlyphs" font-family="Liberation Sans" font-size="5" font-weight="normal" font-style="normal" fill="#5a5068">Головним ресурсом у класичній моделі є</text><text x="11" y="40.699999999999996" textLength="105" lengthAdjust="spacingAndGlyphs" font-family="Liberation Sans" font-size="5" font-weight="normal" font-style="normal" fill="#5a5068">ресурс праці, так як капітал незмінний</text><text x="13" y="48.3" textLength="113.5" lengthAdjust="spacingAndGlyphs" font-family="Liberation Sans" font-size="5" font-weight="normal" font-style="normal" fill="#5a5068">Традиційно    приймається,    що    для</text><text x="11" y="53.9" textLength="115.5" lengthAdjust="spacingAndGlyphs" font-family="Liberation Sans" font-size="5" font-weight="normal" font-style="normal" fill="#5a5068">короткотермінового періоду лише фактор</text><text x="11" y="59.0" textLength="115.5" lengthAdjust="spacingAndGlyphs" font-family="Liberation Sans" font-size="5" font-weight="normal" font-style="normal" fill="#5a5068">праці є змінним, всі інші – земля, капітал,</text><text x="11" y="64.9" textLength="115.5" lengthAdjust="spacingAndGlyphs" font-family="Liberation Sans" font-size="5" font-weight="normal" font-style="normal" fill="#5a5068">технології – постійні. Тому ринок ресурсів</text><text x="11" y="70.2" textLength="115.5" lengthAdjust="spacingAndGlyphs" font-family="Liberation Sans" font-size="5" font-weight="normal" font-style="normal" fill="#5a5068">у класичній моделі зводиться до ринку</text><text x="11" y="75.8" textLength="115.5" lengthAdjust="spacingAndGlyphs" font-family="Liberation Sans" font-size="5" font-weight="normal" font-style="normal" fill="#5a5068">праці,   а   продукт   розглядається   як</text><text x="11" y="80.89999999999999" textLength="61.5" lengthAdjust="spacingAndGlyphs" font-family="Liberation Sans" font-size="5" font-weight="normal" font-style="normal" fill="#5a5068">функція ресурсу праці.</text>
</svg></div>
<div class="a" style="left:42px;top:912px;width:134px;height:63px;overflow:hidden"><svg width="134" height="100" viewBox="0 0 134 100" style="display:block">
<defs><radialGradient id="tg6" gradientUnits="userSpaceOnUse" cx="66.9" cy="51.3" r="77.3" gradientTransform="translate(66.9 51.3) scale(1 1.2308) translate(-66.9 -51.3)"><stop offset="0" stop-color="#fff"/><stop offset="0.12" stop-color="#fcfdff"/><stop offset="1" stop-color="#9cc2fd"/></radialGradient></defs>
<rect width="134" height="100" fill="url(#tg6)"/>
<rect x="0" y="0" width="2.8" height="100" fill="#252852"/>
<g fill="none" stroke-width="0.35">
<path d="M28 20.5 C 17.5 35.3, 10 48.7, 8.4 69.5 C 7.2 81.5, 9.5 93.3, 11 100" stroke="#8c9bc0"/>
<path d="M2.7 54.6 C 5 69.5, 8.3 84.3, 11.3 100" stroke="#8896bd"/>
<path d="M7.7 18.9 C 6 35.3, 5.5 54.6, 6.9 72.5 C 8.4 84.3, 12.6 94.8, 14.5 100" stroke="#252852" stroke-width="0.45"/>
<path d="M2.7 37 C 4.8 48.7, 6.5 60.5, 8.3 72.5 C 11 84.3, 14.7 93.3, 17.3 100" stroke="#252852" stroke-width="0.5"/>
<path d="M27.9 46.1 C 20.4 54.6, 14.2 66.5, 12 81.4 C 10.9 90.3, 12.7 96.3, 14 100" stroke="#252852" stroke-width="0.5"/>
</g>
<path d="M-0.5 10 H14.5 L20 13.8 L14.5 17.5 H-0.5 Z" fill="#4863a8"/>
<text x="15.7" y="10.3" textLength="105.3" lengthAdjust="spacingAndGlyphs" font-family="Liberation Sans" font-size="3.6" font-weight="bold" font-style="normal" fill="#2a2040">Співвідношення попиту та пропозиції на ринку праці</text><g fill="none" stroke="#222" stroke-width="0.5">
<path d="M22 18 V40 M22 40 H57 M22 51 V70 M22 62 H57"/>
<path d="M26 33 Q45 34 52 19" stroke-width="0.8"/><path d="M28 20 Q36 31 50 32" stroke="#888" stroke-width="0.3"/>
<path d="M26 60 Q40 52 55 60" stroke-width="0.7"/>
<path d="M63 51 V70 M63 51 H83 M70 51 V70 M93 51 V70 M93 51 H113 M105 51 V70" />
<path d="M70 51 Q80 56 83 60 M93 52 Q100 58 110 62 M100 53 Q105 57 112 57" stroke="#666" stroke-width="0.3"/>
</g>
<g fill="#fff" stroke="#222" stroke-width="0.7"><rect x="71" y="13" width="18" height="4.6" rx="2"/><rect x="69" y="31" width="19" height="4" rx="1.6"/><rect x="97" y="29" width="22" height="6.5" rx="2"/><rect x="30" y="37.5" width="8" height="4" rx="1"/></g>
<path d="M66 21 L75 17.5 L78 17.5 Z M74 35 L76.5 40 L79 35 Z M101.5 35.5 L103.5 40 L106 35.5 Z" fill="#222"/>

</svg></div>
<!--/THUMBS-->
<!-- slide -->
<div id="slide" class="a"></div>
<svg class="a" style="left:610px;top:233px" width="220" height="676" viewBox="610 233 220 676">
<rect x="616" y="233" width="18" height="675" fill="#252852"/>
<g fill="none" stroke-linecap="round">
<path d="M811 371 C 740 470, 690 560, 672 700" stroke="#94a2c6" stroke-width="1.1"/>
<path d="M672 700 C 664 780, 680 860, 691 908" stroke="#94a2c6" stroke-width="1.8"/>
<path d="M634 600 C 650 700, 672 800, 692 908" stroke="#8f9dc2" stroke-width="2.2"/>
<path d="M667 360 C 660 430, 655 480, 653.5 560" stroke="#252852" stroke-width="1.2"/>
<path d="M653.5 560 C 652 620, 654 680, 662 720 C 672 800, 700 870, 713 908" stroke="#252852" stroke-width="1.9"/>
<path d="M634 482 C 648 560, 660 640, 672 720 C 690 800, 715 860, 732 908" stroke="#252852" stroke-width="2.4"/>
<path d="M810 543 C 760 600, 715 680, 700 780 C 693 840, 705 880, 713 908" stroke="#252852" stroke-width="2.1"/>
</g>
<path d="M613 658.5 L711 658.5 Q714 658.5 716 660.5 L748 693.5 Q751 696.5 748 699.5 L716 732.5 Q714 735 711 735 L613 735 Z" fill="#4863a8"/>
</svg>
<div class="a" style="left:700px;top:480px;width:866px;text-align:center;font-weight:bold;font-size:62px;color:#262626;line-height:73.7px">
<span class="sp" style="letter-spacing:0.3px;position:relative;left:9px">Класична</span><span style="letter-spacing:0.3px;position:relative;left:9px"> модель</span><br><span class="sp" style="letter-spacing:1.65px">макроекономічної</span><br><span class="sp" style="letter-spacing:-0.2px">рівноваги</span></div>
<div id="mscroll" class="a" style="left:1894px;top:218px;width:25px;height:14px;background:#fff;border:1px solid #d0d0d0"></div>
<!-- notes -->
<div class="a" style="left:237px;top:926px;width:1340px;height:1px;background:#bdbdbd"></div>
<div class="t" style="left:252px;top:940px;font-size:21.3px;color:#505050">Нотатки до слайда</div>
<div id="status" class="a"></div>
<!--STATUS-->
<div class="a" style="left:1459px;top:976px;width:45px;height:32px;background:#c6c6c6"></div>
<svg class="a" style="left:0;top:940px" width="1580" height="70" viewBox="0 940 1580 70"><path d="M118.5 982.5 H127 Q129 983 129.5 985 V999 Q129 997 127 997 H118.5 Z M140 982.5 H131.5 Q129.5 983 129.5 985 M129.5 999 V997" fill="none" stroke="#666" stroke-width="1.1"/><path d="M140 990 V997 H132" fill="none" stroke="#666" stroke-width="1.1"/><path d="M133 994 L140 985.5 L142 987.5 L135 995.5 L132.5 996 Z" fill="#666"/><path d="M1241 990.5 H1257 M1241 994.5 H1257 M1241 998.5 H1252" stroke="#777" stroke-width="1.1"/><path d="M1245 987 L1249 982.5 L1253 987 Z" fill="#777"/><path d="M1345 981.5 H1364 V995 H1354 L1349 999.5 V995 H1345 Z" fill="#777"/><g fill="none" stroke="#666" stroke-width="1.1"><rect x="1472.5" y="982.5" width="18" height="16.5"/><path d="M1476.5 982.5 V999 M1476.5 995 H1490.5"/><rect x="1481.5" y="986.5" width="5" height="4"/></g><g fill="none" stroke="#666" stroke-width="1.1"><rect x="1517.5" y="982.5" width="8" height="7"/><rect x="1528.5" y="982.5" width="8" height="7"/><rect x="1517.5" y="992" width="8" height="7"/><rect x="1528.5" y="992" width="8" height="7"/></g><g fill="none" stroke="#666" stroke-width="1.1"><path d="M1562.5 983 V999 H1576 M1562.5 983 H1576 M1566 987 H1576 M1566 990.5 H1576 M1566 994 H1576"/></g></svg>
<div class="t" style="left:7.5px;top:984.0px;font-size:15.2px;color:#555;">Слайд 1 з 21</div>
<div class="t" style="left:157px;top:983.8px;font-size:15.5px;color:#555;">українська</div>
<div class="t" style="left:1264.6px;top:984.0px;font-size:15.7px;color:#555;">Нотатки</div>
<div class="t" style="left:1369.5px;top:983.8px;font-size:16px;color:#555;">Примітки</div>
<div class="a" style="left:23px;top:931px;width:48px;height:48px;border-radius:50%;background:#252525"></div>
<svg class="a" style="left:23px;top:931px" width="48" height="48" viewBox="0 0 48 48"><path d="M14.5 28 L29.5 13 L35.5 19 L20.5 34 H14.5 Z M26.5 16 L32.5 22" fill="none" stroke="#1ee38a" stroke-width="1.8" stroke-linejoin="round"/><path d="M14 35.5 H35" stroke="#1ee38a" stroke-width="1.8"/></svg>
<!--/STATUS-->
<div id="taskbar" class="a"></div>
<!--TASKBAR-->
<svg class="a" style="left:0;top:1008px" width="1920" height="72" viewBox="0 1008 1920 72"><defs><linearGradient id="win" x1="0" y1="0" x2="1" y2="1"><stop offset="0" stop-color="#8de8ff"/><stop offset="1" stop-color="#1797ea"/></linearGradient><linearGradient id="fold" x1="0" y1="0" x2="0" y2="1"><stop offset="0" stop-color="#ffd75e"/><stop offset="1" stop-color="#f3b81e"/></linearGradient><linearGradient id="cop" x1="0" y1="0" x2="1" y2="1"><stop offset="0" stop-color="#2bb4f5"/><stop offset="0.35" stop-color="#3fd68a"/><stop offset="0.55" stop-color="#f6c84a"/><stop offset="0.75" stop-color="#f26b5b"/><stop offset="1" stop-color="#b86de8"/></linearGradient><radialGradient id="cloud" cx="0.5" cy="0.3" r="0.7"><stop offset="0" stop-color="#f4f8ff"/><stop offset="1" stop-color="#8fb4e8"/></radialGradient><linearGradient id="feather" x1="0" y1="1" x2="1" y2="0"><stop offset="0" stop-color="#7a3fc0"/><stop offset="1" stop-color="#e0c8ff"/></linearGradient></defs><path d="M33 1060 Q29 1060 29.5 1054 Q30 1048 36 1048 Q38 1040 47 1040 Q55 1040 57 1047 Q65 1047 66 1053 Q66.5 1060 61 1060 Z" fill="url(#cloud)"/><rect x="42.5" y="1019" width="35" height="23.5" rx="11.5" fill="#262626"/><rect x="347" y="1027" width="16.5" height="16.5" rx="1.5" fill="url(#win)"/><rect x="365.5" y="1027" width="16.5" height="16.5" rx="1.5" fill="url(#win)"/><rect x="347" y="1045.5" width="16.5" height="16.5" rx="1.5" fill="url(#win)"/><rect x="365.5" y="1045.5" width="16.5" height="16.5" rx="1.5" fill="url(#win)"/><circle cx="430" cy="1041.8" r="11.8" fill="#5b3b3c" stroke="#dcdcdc" stroke-width="3.6"/><path d="M438.5 1050.5 L446.5 1059" stroke="#dcdcdc" stroke-width="3.8" stroke-linecap="round"/><path d="M497.6 1043.9 L482.0 1034.9 A18 18 0 0 1 513.2 1034.9 Z" fill="#ea4335"/><path d="M497.6 1043.9 L513.2 1034.9 A18 18 0 0 1 497.6 1061.9 Z" fill="#fbbc04"/><path d="M497.6 1043.9 L497.6 1061.9 A18 18 0 0 1 482.0 1034.9 Z" fill="#34a853"/><circle cx="497.6" cy="1043.9" r="8.5" fill="#fff"/><circle cx="497.6" cy="1043.9" r="6.7" fill="#4285f4"/><path d="M546 1043 Q546 1026 564 1026 Q580 1026 581.5 1040 Q581 1049 571 1049 Q562 1049 563 1043 Q560 1036 553 1040 Q548 1046 556 1055 Q565 1062 578 1055 Q570 1062 563 1061.5 Q546 1060 546 1043 Z" fill="#1d8fdc"/><path d="M550 1036 Q556 1027 566 1027 Q579 1028 581 1040 Q581 1048 572 1048 Q565 1046 570 1040 Q566 1031 550 1036 Z" fill="#3cc97a"/><circle cx="554.3" cy="1053" r="8.6" fill="#cfcfcf"/><circle cx="554.3" cy="1050" r="3" fill="#8a8a8a"/><path d="M548.5 1059 Q554.3 1051 560 1059" fill="#8a8a8a"/><rect x="613.5" y="1027" width="33.5" height="33.5" rx="2" fill="#2a4fd0"/><rect x="621" y="1027" width="16" height="10" fill="#e6e6e6"/><rect x="630.5" y="1028.5" width="4" height="7" fill="#2a4fd0"/><rect x="617" y="1041" width="26.5" height="18" fill="#fff"/><path d="M619 1044.5 H641 M619 1048.5 H641 M619 1052.5 H632 M619 1056 H641" stroke="#e04040" stroke-width="1"/><text x="632" y="1056" font-family="Liberation Mono" font-size="8" fill="#333">64</text><path d="M680 1031 L699 1027.5 V1060 L680 1056.5 Z" fill="#1f7244"/><rect x="697" y="1031" width="15" height="25.5" fill="#fff" stroke="#1f7244" stroke-width="1.2"/><path d="M699.5 1035.5 H710 M699.5 1040 H710 M699.5 1044.5 H710 M699.5 1049 H710 M699.5 1053 H710 M703 1033 V1055" stroke="#1f7244" stroke-width="1"/><text x="684" y="1049.5" font-family="Liberation Sans" font-weight="bold" font-size="14" fill="#fff">X</text><path d="M748 1061 Q750 1042 776 1027 Q774 1046 754 1057 Z" fill="url(#feather)"/><path d="M749 1060 Q758 1045 775 1028" stroke="#f0e0ff" stroke-width="0.8" fill="none"/><path d="M754 1050 L760 1051 M757 1045 L764 1046 M761 1040 L768 1040 M765 1035 L771 1035" stroke="#5a2a90" stroke-width="0.7" opacity="0.7"/><path d="M750 1061 Q756 1060 762 1058" stroke="#1a0e20" stroke-width="2" opacity="0.45"/><ellipse cx="828" cy="1043.5" rx="17" ry="17.5" fill="#e8202a"/><ellipse cx="828" cy="1043.5" rx="8" ry="13.5" fill="#43181d"/><path d="M876 1030 Q876 1028 878 1028 H888 L892 1031 H910 Q912.3 1031 912.3 1033 V1058.5 Q912.3 1060.7 910 1060.7 H878 Q876 1060.7 876 1058.5 Z" fill="url(#fold)"/><path d="M876 1030 Q876 1028 878 1028 H888 L892 1031 V1033 H876 Z" fill="#e5a50f"/><rect x="882" y="1049.5" width="24" height="11.2" rx="3" fill="#1c8ae0"/><path d="M887 1053.5 H901" stroke="#0b4f94" stroke-width="1.6"/><defs><linearGradient id="copL" x1="0" y1="0" x2="0.3" y2="1"><stop offset="0" stop-color="#1e8ef0"/><stop offset="0.45" stop-color="#36d07a"/><stop offset="0.75" stop-color="#f2c23a"/><stop offset="1" stop-color="#f46a4a"/></linearGradient><linearGradient id="copR" x1="0" y1="0" x2="0.3" y2="1"><stop offset="0" stop-color="#2a6ae8"/><stop offset="0.4" stop-color="#9a5ae0"/><stop offset="0.8" stop-color="#e868b0"/><stop offset="1" stop-color="#f48a70"/></linearGradient></defs><path d="M951 1030 H969 Q973 1030 972 1034 L961.5 1034 Q957.5 1034 956.5 1038 L952 1054 Q950 1059 946 1059 Q942 1058.5 943 1054 L947.5 1035 Q948.5 1030 951 1030 Z" fill="url(#copL)"/><path d="M966 1033.5 Q970 1031 973.5 1033 Q977 1035 976 1040 L972 1054 Q970.5 1058.5 966 1058.5 H948.5 Q945 1058.5 946 1055 L961 1055 Q964 1055 965 1051 Z" fill="url(#copR)"/><path d="M1012 1030 Q1026 1024 1040 1030 Q1044 1036 1043 1045 Q1042 1055 1030 1057 L1023 1057 L1017 1061.5 L1017 1056 Q1009 1053 1009 1043 Q1009 1034 1012 1030 Z" fill="#fff"/><path d="M1014 1032.5 Q1026 1027.5 1038 1032.5 Q1041 1037 1040.5 1045 Q1039 1052 1029 1054 L1022 1054 L1019.5 1056.5 V1053 Q1012 1050.5 1012 1043 Q1012 1036 1014 1032.5 Z" fill="#7b6ff0"/><path d="M1018.5 1037 Q1018 1040 1022 1045 Q1027 1050 1031 1049.5 L1032.5 1047 L1029 1045 L1027 1046 Q1023.5 1044 1022.5 1041 L1023.5 1039 L1021.5 1035.5 Z" fill="#fff"/><rect x="1028.4" y="1019" width="23.6" height="24" rx="7" fill="#f2352e"/><text x="1036" y="1037" font-family="Liberation Sans" font-size="15" fill="#fff">1</text><path d="M1092 1043.7 L1076.4 1034.7 A18 18 0 0 1 1107.6 1034.7 Z" fill="#ea4335"/><path d="M1092 1043.7 L1107.6 1034.7 A18 18 0 0 1 1092.0 1061.7 Z" fill="#fbbc04"/><path d="M1092 1043.7 L1092.0 1061.7 A18 18 0 0 1 1076.4 1034.7 Z" fill="#34a853"/><circle cx="1092" cy="1043.7" r="8.5" fill="#fff"/><circle cx="1092" cy="1043.7" r="6.7" fill="#4285f4"/><circle cx="1105.3" cy="1031" r="12.8" fill="#7e9ac0"/><path d="M1102 1020 Q1106 1030 1103 1042 M1107 1021 Q1110 1032 1106 1042" stroke="#444" stroke-width="2" fill="none" opacity="0.6"/><rect x="1156" y="1032" width="17.6" height="25" fill="#fff" stroke="#d04423" stroke-width="1.4"/><path d="M1160 1037 H1170 M1160 1050 H1170 M1160 1054 H1170" stroke="#d04423" stroke-width="1.2"/><path d="M1164 1043 A5 5 0 1 0 1169 1038 V1043 Z" fill="#d04423"/><path d="M1141.6 1032 L1159 1028 V1059.5 L1141.6 1056 Z" fill="#d04423"/><text x="1144.5" y="1049.5" font-family="Liberation Sans" font-weight="bold" font-size="14" fill="#fff">P</text><rect x="1210" y="1026" width="28" height="35.7" rx="3" fill="#6e7a86"/><rect x="1213" y="1029" width="22" height="6.5" fill="#4fd0f0"/><rect x="1213.0" y="1038.5" width="5.6" height="5.6" rx="1" fill="#d9dde2"/><rect x="1220.8" y="1038.5" width="5.6" height="5.6" rx="1" fill="#d9dde2"/><rect x="1228.6" y="1038.5" width="5.6" height="5.6" rx="1" fill="#d9dde2"/><rect x="1213.0" y="1046.0" width="5.6" height="5.6" rx="1" fill="#d9dde2"/><rect x="1220.8" y="1046.0" width="5.6" height="5.6" rx="1" fill="#d9dde2"/><rect x="1213.0" y="1053.5" width="5.6" height="5.6" rx="1" fill="#d9dde2"/><rect x="1220.8" y="1053.5" width="5.6" height="5.6" rx="1" fill="#d9dde2"/><rect x="1228.6" y="1046" width="5.6" height="13" rx="1" fill="#1b4f94"/><rect x="1288" y="1031" width="17.6" height="25.5" fill="#fff" stroke="#2b579a" stroke-width="1.2"/><path d="M1292 1035 H1303 M1292 1039 H1303 M1292 1043 H1303 M1292 1047 H1303 M1292 1051 H1303" stroke="#2b579a" stroke-width="1.2"/><path d="M1274 1032 L1292 1028 V1060 L1274 1056 Z" fill="#2b579a"/><text x="1275" y="1049.5" font-family="Liberation Sans" font-weight="bold" font-size="14" fill="#fff">W</text><rect x="1334" y="1014.5" width="51" height="59" rx="5" fill="#ffffff" opacity="0.06"/><rect x="1326.5" y="1014.5" width="51" height="59" rx="5" fill="#ffffff" opacity="0.09"/><rect x="1337.5" y="1026" width="36" height="36" rx="15" fill="#0b5cff"/><text x="1342" y="1048" font-family="Liberation Sans" font-weight="bold" font-size="11" fill="#fff">zoom</text><rect x="1344" y="1068" width="24" height="5" rx="2.5" fill="#f4a48a"/><rect x="625.5" y="1068.5" width="9" height="4.5" rx="2.2" fill="#a69a9c"/><rect x="691.5" y="1068.5" width="9" height="4.5" rx="2.2" fill="#a69a9c"/><rect x="1021.5" y="1068.5" width="9" height="4.5" rx="2.2" fill="#a69a9c"/><rect x="1087.5" y="1068.5" width="9" height="4.5" rx="2.2" fill="#a69a9c"/><rect x="1153.5" y="1068.5" width="9" height="4.5" rx="2.2" fill="#a69a9c"/><rect x="1219.5" y="1068.5" width="9" height="4.5" rx="2.2" fill="#a69a9c"/><rect x="1285.5" y="1068.5" width="9" height="4.5" rx="2.2" fill="#a69a9c"/><path d="M1492 1047.5 L1499.5 1040 L1507 1047.5" stroke="#fff" stroke-width="1.8" fill="none"/><rect x="1535.5" y="1032.5" width="7" height="11" rx="3.5" fill="none" stroke="#f0a080" stroke-width="1.6"/><path d="M1532.5 1040 Q1532.5 1047 1539 1047 Q1545.5 1047 1545.5 1040 M1539 1047 V1050" fill="none" stroke="#f0a080" stroke-width="1.6"/><path d="M1562 1039 L1548 1046 L1554.5 1048 L1557 1055.5 Z" fill="none" stroke="#f0a080" stroke-width="1.6" stroke-linejoin="round"/><g fill="none" stroke="#fff" stroke-width="2" stroke-linecap="round"><path d="M1649.5 1040.5 Q1661 1030 1672.5 1040.5"/><path d="M1653.5 1044.5 Q1661 1037.5 1668.5 1044.5"/><path d="M1657.5 1048 Q1661 1045 1664.5 1048"/></g><circle cx="1661" cy="1051" r="1.8" fill="#fff"/><g fill="none" stroke="#fff" stroke-width="1.7" stroke-linejoin="round"><path d="M1686 1039.5 H1690 L1696.5 1034.5 V1052.5 L1690 1047 H1686 Z"/><path d="M1700 1039 Q1703 1043.5 1700 1048" stroke-linecap="round"/><path d="M1703.5 1036 Q1709 1043.5 1703.5 1051" stroke-linecap="round"/></g><rect x="1722" y="1037" width="19.5" height="14" rx="3" fill="none" stroke="#fff" stroke-width="1.8"/><rect x="1724.5" y="1039.5" width="14.5" height="9" rx="1" fill="#fff"/><rect x="1742.5" y="1041.5" width="2.5" height="5" rx="1" fill="#fff"/><path d="M1869.5 1050 Q1872.5 1047 1872.5 1042 Q1872.5 1035.5 1878 1035 M1887.5 1050 Q1884.5 1047 1884.5 1043 M1869.5 1050 H1887.5 M1875.5 1052.5 Q1878.5 1055.5 1881.5 1052.5" fill="none" stroke="#fff" stroke-width="1.8" stroke-linejoin="round" stroke-linecap="round"/><path d="M1874.5 1041.5 H1880.5 L1874.5 1047 H1880.5" fill="none" stroke="#fff" stroke-width="1.9" stroke-linejoin="round"/><path d="M1883 1032.5 H1888 L1883 1037.5 H1888" fill="none" stroke="#fff" stroke-width="1.6" stroke-linejoin="round"/></svg>
<div class="t" style="left:47.5px;top:1024.1px;font-size:14px;color:#fff;">-11°</div>
<div class="t" style="left:1586px;top:1037.2px;font-size:15.7px;color:#fff;">ENG</div>
<div class="t" style="left:1771px;top:1047.8px;font-size:16.8px;color:#fff;">17.02.2026</div>
<div class="t" style="left:1813px;top:1023.7px;font-size:17.5px;color:#fff;">10:22</div>
<!--/TASKBAR-->
<div id="ztb" class="a"></div>
<svg class="a" style="left:0;top:0" width="1920" height="112" viewBox="0 0 1920 112">
<g fill="none" stroke="#fff" stroke-width="2.2" stroke-linecap="round" stroke-linejoin="round">
<!-- mic -->
<rect x="187.5" y="35.5" width="13" height="24" rx="6.5"/>
<path d="M183.5 52.5 A10.5 10.5 0 0 0 204.5 52.5" />
<path d="M194 63.5 V69.5 M187.5 70 H200.5"/>
<path d="M231 49.8 L236 54.8 L241 49.8"/>
<!-- video -->
<rect x="302.5" y="43.5" width="24" height="20.5" rx="5"/>
<path d="M328.5 53.5 L337.5 45 V62.5 Z"/>
<path d="M357 49.8 L362 54.8 L367 49.8"/>
<!-- participants -->
<circle cx="470.6" cy="45" r="3.7"/>
<circle cx="481.6" cy="49.3" r="3.3"/>
<path d="M474 54.5 C 472 53, 463 52.5, 463 60 V63 Q463 65.5 465.5 65.5 H470"/>
<rect x="474.5" y="57" width="14" height="8.8" rx="4.4"/>
<path d="M543.5 49.8 L548.5 54.8 L553.5 49.8"/>
<!-- chat -->
<path d="M636.5 40 C 638 37, 642 37, 646 37 C 654 37, 655.5 39, 655.5 45 C 655.5 50, 655 53, 652 55.5"/>
<path d="M632 45 H641 Q648.5 45 648.5 53 V57 Q648.5 64 641 64 H637 L629 68.5 L630.5 64 Q623.5 63 623.5 56 V53 Q623.5 45 632 45 Z"/>
<path d="M684.5 49.8 L689.5 54.8 L694.5 49.8"/>
<!-- share chevron -->
<path d="M810 49.8 L815 54.8 L820 49.8"/>
<!-- layout -->
<rect x="1008" y="38.5" width="37.5" height="28" rx="4.5"/>
<!-- pencil -->
<path d="M1157.5 57 L1179 35.5 L1187 43.5 L1165.5 65 H1157.5 Z M1173.5 41 L1181 48.5"/>
<path d="M1157.5 69.8 H1187.5" stroke-width="2.4"/>
<!-- mouse -->
<rect x="1372" y="35.5" width="26.5" height="34.5" rx="13.2"/>
<path d="M1385 44 V51" stroke-width="3.6"/>
<!-- more -->
<circle cx="1822" cy="52.8" r="17"/>
</g>
<g fill="#fff">
<circle cx="630.3" cy="54.7" r="1.6"/><circle cx="636.2" cy="54.7" r="1.6"/><circle cx="642" cy="54.7" r="1.6"/>
<rect x="889.5" y="40.3" width="7.3" height="25" rx="2"/>
<rect x="900.8" y="40.3" width="7.5" height="25" rx="2"/>
<circle cx="1019.3" cy="49.6" r="5.2"/>
<path d="M1009 66 V64 Q1010 57 1019.5 57 Q1029 57 1030 64 V66 Z"/>
<rect x="1612" y="39" width="34.5" height="25" rx="4"/>
<circle cx="1812.7" cy="52.8" r="2.1"/><circle cx="1822" cy="52.8" r="2.1"/><circle cx="1831" cy="52.8" r="2.1"/>
</g>
<rect x="1625" y="48" width="25" height="21" rx="5.5" fill="#0e0e0e"/>
<rect x="1629" y="51.5" width="18" height="14" rx="3" fill="none" stroke="#fff" stroke-width="2"/>
<!-- mic fill -->
<path d="M188.6 50.7 H199.4 V53 A5.4 5.4 0 0 1 188.6 53 Z" fill="#24d35c"/>
<!-- share -->
<rect x="755" y="38" width="36" height="29.5" rx="4.5" fill="#0ee889"/>
<path d="M773 61.5 V46 M766.5 52 L773 45.5 L779.5 52" stroke="#0e0e0e" stroke-width="3.3" fill="none" stroke-linecap="round" stroke-linejoin="round"/>
</svg>
<div class="t" style="left:503px;top:29.5px;font-size:16.5px;color:#d0d0d0">14</div>
<div class="a" style="left:566px;top:111px;width:501px;height:35px;background:#24d95d;border-radius:0 0 0 7px"></div>
<div class="a" style="left:1067px;top:111px;width:401px;height:35px;background:#df2727;border-radius:0 0 7px 0"></div>
<svg class="a" style="left:580px;top:115px" width="30" height="26" viewBox="0 0 30 26">
<path d="M6.5 13 L12.5 5 L18 12 H14.5 Q14.5 17.5 21 18.5 V20 Q9.5 20 10 12 Z" fill="#0c5a10"/>
</svg>
<svg class="a" style="left:1033px;top:119px" width="19" height="20" viewBox="0 0 19 20">
<path d="M9.5 1.5 L17 4.5 V10 Q17 15.5 9.5 18.8 Q2 15.5 2 10 V4.5 Z" fill="#1a4d1e"/>
<path d="M5.8 10.2 L8.5 12.8 L13.2 7.8" stroke="#2ee05e" stroke-width="2" fill="none" stroke-linecap="round"/>
</svg>
<div class="a" style="left:1079px;top:118.5px;width:12.5px;height:12px;background:#dcfcff;border-radius:2px"></div>
<div class="t" style="left:650px;top:121px;font-size:17.85px;font-weight:bold;color:#1d1b36">Вы запустили демонстрацию экрана</div>
<div class="t" style="left:1106px;top:119.5px;font-size:16.55px;font-weight:bold;color:#fff">Остановить совместное использование</div>
<div class="zl" style="left:194px">Звук</div>
<div class="zl" style="left:319px">Видео</div>
<div class="zl" style="left:475px">Участники</div>
<div class="zl" style="left:639px">Чат</div>
<div class="zl" style="left:772px">Поделиться</div>
<div class="zl" style="left:899px">Пауза</div>
<div class="zl" style="left:1026px">Компоновка</div>
<div class="zl" style="left:1172px">Комментировать</div>
<div class="zl" style="left:1386px">Дистанционное управление</div>
<div class="zl" style="left:1629px">Показать конференцию</div>
<div class="zl" style="left:1821px">Дополнительно</div>
<!--VIDEO-->
<div class="a" style="left:1576px;top:229px;width:344px;height:802px;background:#121212;border-radius:4px 0 0 4px;border-bottom:3px solid #111a1a"></div>
<div class="a" style="left:1581px;top:309.5px;width:336px;height:675px;background:#232323"></div>
<div class="a" style="left:1581px;top:268.5px;width:336px;height:41px;background:linear-gradient(#262626,#0f0f0f)"></div>
<div class="a" style="left:1696.5px;top:268.5px;width:105.5px;height:41px;background:linear-gradient(#36302e,#121010);overflow:hidden"><div style="position:absolute;left:0;top:0;width:106px;height:41px;background:repeating-linear-gradient(90deg,rgba(255,255,255,0.05) 0 6px,rgba(0,0,0,0.12) 6px 12px);filter:blur(1px)"></div></div>
<div class="a" style="left:1581px;top:984.5px;width:336px;height:42px;background:linear-gradient(#1e1e1e,#101010)"></div>
<div class="a" style="left:1696px;top:984.5px;width:106px;height:42px;background:linear-gradient(#222,#141414)"></div>
<svg class="a" style="left:1696px;top:309.5px" width="106" height="150" viewBox="0 0 106 150"><defs><filter id="bl1" x="-10%" y="-10%" width="120%" height="120%"><feGaussianBlur stdDeviation="1.2"/></filter><filter id="bb1" x="-30%" y="-30%" width="160%" height="160%"><feGaussianBlur stdDeviation="5"/></filter></defs><g filter="url(#bl1)"><rect x="-5" y="-5" width="116" height="160" fill="#bcaca4"/><rect x="-4.0" y="-5" width="6" height="110" fill="#8a7068"/><rect x="3.0" y="-5" width="4" height="110" fill="#e0d6ce"/><rect x="8.5" y="-5" width="6" height="110" fill="#8a7068"/><rect x="15.5" y="-5" width="4" height="110" fill="#e0d6ce"/><rect x="21.0" y="-5" width="6" height="110" fill="#8a7068"/><rect x="28.0" y="-5" width="4" height="110" fill="#e0d6ce"/><rect x="33.5" y="-5" width="6" height="110" fill="#8a7068"/><rect x="40.5" y="-5" width="4" height="110" fill="#e0d6ce"/><rect x="46.0" y="-5" width="6" height="110" fill="#8a7068"/><rect x="53.0" y="-5" width="4" height="110" fill="#e0d6ce"/><rect x="58.5" y="-5" width="6" height="110" fill="#8a7068"/><rect x="65.5" y="-5" width="4" height="110" fill="#e0d6ce"/><rect x="71.0" y="-5" width="6" height="110" fill="#8a7068"/><rect x="78.0" y="-5" width="4" height="110" fill="#e0d6ce"/><rect x="83.5" y="-5" width="6" height="110" fill="#8a7068"/><rect x="90.5" y="-5" width="4" height="110" fill="#e0d6ce"/><rect x="96.0" y="-5" width="6" height="110" fill="#8a7068"/><rect x="103.0" y="-5" width="4" height="110" fill="#e0d6ce"/><rect x="108.5" y="-5" width="6" height="110" fill="#8a7068"/><rect x="115.5" y="-5" width="4" height="110" fill="#e0d6ce"/>
<path d="M20 52 Q18 22 45 20 Q70 19 72 48 L72 58 L20 58 Z" fill="#3a2c24"/>
<path d="M22 45 Q22 32 46 31 Q70 31 70 48 L71 72 Q70 96 48 103 Q26 98 23 74 Z" fill="#d5a494"/>
<ellipse cx="20" cy="64" rx="3" ry="6" fill="#c89484"/><ellipse cx="72" cy="62" rx="3" ry="6" fill="#c89484"/>
<ellipse cx="33" cy="60" rx="6" ry="2.5" fill="#8a6a62"/><ellipse cx="57" cy="58" rx="6" ry="2.5" fill="#8a6a62"/>
<path d="M40 84 Q47 82 54 84" stroke="#9a6a60" stroke-width="1.8" fill="none"/>
<path d="M42 58 L40 75 Q46 78 50 75" stroke="#c08878" stroke-width="1.5" fill="none"/>
<rect x="32" y="92" width="34" height="30" fill="#c8968a"/>
<path d="M-5 108 Q10 97 28 95 L44 125 L56 125 L72 93 Q95 96 111 110 L111 155 L-5 155 Z" fill="#878676"/>
<path d="M27 96 L45 128 L49 128 L33 95 Z M73 93 L57 128 L61 128 L77 96 Z" fill="#4a4a3c"/>
<rect x="46" y="120" width="12" height="35" fill="#eeeeee"/></g></svg>
<svg class="a" style="left:1696px;top:459.5px" width="106" height="189" viewBox="0 0 106 189"><defs><filter id="bl2" x="-10%" y="-10%" width="120%" height="120%"><feGaussianBlur stdDeviation="1.2"/></filter><filter id="bb2" x="-30%" y="-30%" width="160%" height="160%"><feGaussianBlur stdDeviation="5"/></filter></defs><g filter="url(#bl2)"><rect x="-5" y="-5" width="116" height="200" fill="#c8c2ba"/>
<rect x="-5" y="-5" width="116" height="60" fill="#d2cdc6"/>
<path d="M-5 90 L70 78 L111 76 L111 195 L-5 195 Z" fill="#b8aea4"/>
<rect x="70" y="78" width="41" height="110" fill="#d6d0c8"/>
<path d="M74 16 Q90 20 104 25 M84 8 Q96 18 104 30 M95 5 Q100 15 106 22" stroke="#5a6a48" stroke-width="2.5" fill="none"/>
<path d="M0 190 L2 120 Q4 62 40 60 Q76 60 82 110 L86 190 Z" fill="#9a7a5e"/>
<path d="M26 95 Q26 72 47 72 Q68 72 68 96 L68 112 Q66 134 47 136 Q28 134 27 112 Z" fill="#e6c2ae"/>
<ellipse cx="37" cy="96" rx="4.5" ry="2" fill="#7a5a4a"/><ellipse cx="57" cy="95" rx="4.5" ry="2" fill="#7a5a4a"/>
<path d="M40 118 Q47 121 54 117" stroke="#b07a70" stroke-width="1.8" fill="none"/>
<rect x="32" y="130" width="28" height="25" fill="#d8a898"/>
<path d="M-5 170 Q20 150 40 152 Q70 148 111 130 L111 195 L-5 195 Z" fill="#c49c98"/>
<path d="M0 190 L4 125 Q10 150 22 190 Z M82 110 Q85 150 80 190 L70 190 Q76 150 70 112 Z" fill="#9a7a5e"/></g></svg>
<svg class="a" style="left:1581px;top:649px" width="336" height="188.5" viewBox="0 0 336 188.5"><defs><filter id="bl3" x="-10%" y="-10%" width="120%" height="120%"><feGaussianBlur stdDeviation="1.2"/></filter><filter id="bb3" x="-30%" y="-30%" width="160%" height="160%"><feGaussianBlur stdDeviation="5"/></filter></defs><g filter="url(#bl3)"><rect x="-5" y="-5" width="346" height="200" fill="#a0a6c2"/>
<rect x="-5" y="-5" width="346" height="21" fill="#e8e4dc"/>
<rect x="-5" y="15" width="346" height="3" fill="#bcb8bc"/>
<path d="M283 10 L340 10 L340 195 L300 195 Z" fill="#d8dae8"/>
<path d="M300 10 L340 10 L340 195 L322 195 Z" fill="#eef0f8"/>
<ellipse cx="241" cy="165" rx="24" ry="40" fill="#f8f8fc" filter="url(#bb3)"/>
<path d="M115 195 Q110 90 135 64 Q165 45 195 60 Q224 80 224 150 L228 195 Z" fill="#4a1c1e"/>
<path d="M205 80 Q222 110 220 195 L232 195 Q232 110 205 80 Z" fill="#6a2c28"/>
<path d="M144 102 Q144 72 174 72 Q204 72 204 102 L204 128 Q201 160 174 162 Q147 160 145 128 Z" fill="#a87268"/>
<ellipse cx="158" cy="110" rx="7" ry="2.5" fill="#5a3434"/><ellipse cx="190" cy="110" rx="7" ry="2.5" fill="#5a3434"/>
<path d="M165 145 Q174 148 183 145" stroke="#7a4a48" stroke-width="2" fill="none"/>
<path d="M150 160 L196 160 L204 195 L142 195 Z" fill="#9a6660"/></g></svg>
<svg class="a" style="left:1696px;top:837.5px" width="106" height="147" viewBox="0 0 106 147"><defs><filter id="bl4" x="-10%" y="-10%" width="120%" height="120%"><feGaussianBlur stdDeviation="1.2"/></filter><filter id="bb4" x="-30%" y="-30%" width="160%" height="160%"><feGaussianBlur stdDeviation="5"/></filter></defs><g filter="url(#bl4)"><rect x="-5" y="-5" width="116" height="157" fill="#a49cb0"/>
<path d="M-5 -5 L111 -5 L111 30 L-5 60 Z" fill="#aca4b6"/>
<path d="M104 25 L84 95 L87 96 L108 28 Z" fill="#d0ccd8"/>
<path d="M108 28 L111 20 L111 152 L70 152 L87 96 Z" fill="#7e7490"/>
<path d="M22 152 Q20 95 30 72 Q45 55 62 58 Q82 65 86 105 L90 152 Z" fill="#5a4034"/>
<path d="M38 84 Q38 64 56 64 Q75 64 75 84 L75 98 Q73 118 56 119 Q40 118 39 98 Z" fill="#e0c0b0"/>
<ellipse cx="48" cy="85" rx="4" ry="1.6" fill="#6a4a40"/><ellipse cx="66" cy="86" rx="4" ry="1.6" fill="#6a4a40"/>
<path d="M51 103 Q56 105 61 103" stroke="#a07068" stroke-width="1.5" fill="none"/>
<path d="M42 152 Q48 130 60 125 Q90 122 106 140 L106 152 Z" fill="#c8d4ec"/>
<path d="M45 141 H95 M44 147 H100" stroke="#8aa0c8" stroke-width="2"/>
<path d="M22 152 Q26 125 34 110 L42 152 Z M86 105 L90 152 L76 152 Q84 130 80 108 Z" fill="#5a4034"/>
<rect x="-5" y="108" width="20" height="10" fill="#262626"/></g></svg>
<div class="a" style="left:1585px;top:428px;width:93.5px;height:29.5px;border-radius:7px;background:#2d2d2d"></div>
<svg class="a" style="left:1591px;top:432px" width="22" height="22" viewBox="0 0 22 22"><path d="M9 2.5 Q9 0.5 12 0.5 Q15.5 0.5 15.5 3 V9 Q15.5 12 13 13 Z" fill="#f05555"/><path d="M15.8 14.5 Q13.5 16.5 11 16.2 M11 16.2 V19.5 M8 20 H14" fill="none" stroke="#f05555" stroke-width="1.8"/><path d="M1.5 20.5 L19 3" stroke="#f05555" stroke-width="2"/></svg>
<div class="t" style="left:1617.5px;top:433.5px;font-size:18.5px;color:#fff;">влад п</div>
<div class="a" style="left:1585px;top:617.5px;width:142px;height:29.5px;border-radius:7px;background:#2d2d2d"></div>
<svg class="a" style="left:1591px;top:621.5px" width="22" height="22" viewBox="0 0 22 22"><path d="M9 2.5 Q9 0.5 12 0.5 Q15.5 0.5 15.5 3 V9 Q15.5 12 13 13 Z" fill="#f05555"/><path d="M15.8 14.5 Q13.5 16.5 11 16.2 M11 16.2 V19.5 M8 20 H14" fill="none" stroke="#f05555" stroke-width="1.8"/><path d="M1.5 20.5 L19 3" stroke="#f05555" stroke-width="2"/></svg>
<div class="t" style="left:1617.5px;top:623.0px;font-size:18.5px;color:#fff;">Даша Левун</div>
<div class="a" style="left:1585px;top:805.5px;width:183px;height:29.5px;border-radius:7px;background:#2d2d2d"></div>
<svg class="a" style="left:1591px;top:809.5px" width="22" height="22" viewBox="0 0 22 22"><path d="M9 2.5 Q9 0.5 12 0.5 Q15.5 0.5 15.5 3 V9 Q15.5 12 13 13 Z" fill="#f05555"/><path d="M15.8 14.5 Q13.5 16.5 11 16.2 M11 16.2 V19.5 M8 20 H14" fill="none" stroke="#f05555" stroke-width="1.8"/><path d="M1.5 20.5 L19 3" stroke="#f05555" stroke-width="2"/></svg>
<div class="t" style="left:1617.5px;top:811.0px;font-size:18.5px;color:#fff;">Катя Григоренко</div>
<div class="a" style="left:1585px;top:952.5px;width:141px;height:29.5px;border-radius:7px;background:#2d2d2d"></div>
<svg class="a" style="left:1591px;top:956.5px" width="22" height="22" viewBox="0 0 22 22"><path d="M9 2.5 Q9 0.5 12 0.5 Q15.5 0.5 15.5 3 V9 Q15.5 12 13 13 Z" fill="#f05555"/><path d="M15.8 14.5 Q13.5 16.5 11 16.2 M11 16.2 V19.5 M8 20 H14" fill="none" stroke="#f05555" stroke-width="1.8"/><path d="M1.5 20.5 L19 3" stroke="#f05555" stroke-width="2"/></svg>
<div class="t" style="left:1617.5px;top:958.0px;font-size:18.5px;color:#fff;">Саша Шрам</div>
<svg class="a" style="left:1576px;top:229px" width="344" height="802" viewBox="1576 229 344 802"><rect x="1590" y="254" width="18" height="3.5" rx="1.5" fill="#c8c8c8"/><rect x="1632" y="247" width="18" height="12" rx="2" fill="#c8c8c8"/><rect x="1674.5" y="240.5" width="17" height="8" rx="2" fill="#2d8cff"/><rect x="1674.5" y="250.5" width="17" height="8.5" rx="2" fill="#2d8cff"/><rect x="1714.0" y="240.5" width="5.6" height="5" rx="1.2" fill="#c8c8c8"/><rect x="1721.4" y="240.5" width="5.6" height="5" rx="1.2" fill="#c8c8c8"/><rect x="1728.8" y="240.5" width="5.6" height="5" rx="1.2" fill="#c8c8c8"/><rect x="1714.0" y="246.8" width="5.6" height="5" rx="1.2" fill="#c8c8c8"/><rect x="1721.4" y="246.8" width="5.6" height="5" rx="1.2" fill="#c8c8c8"/><rect x="1728.8" y="246.8" width="5.6" height="5" rx="1.2" fill="#c8c8c8"/><rect x="1714.0" y="253.1" width="5.6" height="5" rx="1.2" fill="#c8c8c8"/><rect x="1721.4" y="253.1" width="5.6" height="5" rx="1.2" fill="#c8c8c8"/><rect x="1728.8" y="253.1" width="5.6" height="5" rx="1.2" fill="#c8c8c8"/><path d="M1901 238.5 H1910.5 V248 M1910.5 238.5 L1900 249 M1887.5 251.5 V261 H1897 M1887.5 261 L1897 251.5" fill="none" stroke="#9a9a9a" stroke-width="1.7"/><path d="M1741.5 293 L1749 285.5 L1756.5 293" fill="none" stroke="#fff" stroke-width="2.2"/><path d="M1741 1002.5 L1749 1010 L1757 1002.5" fill="none" stroke="#fff" stroke-width="2.2"/></svg>
<!--/VIDEO-->
</body></html>
